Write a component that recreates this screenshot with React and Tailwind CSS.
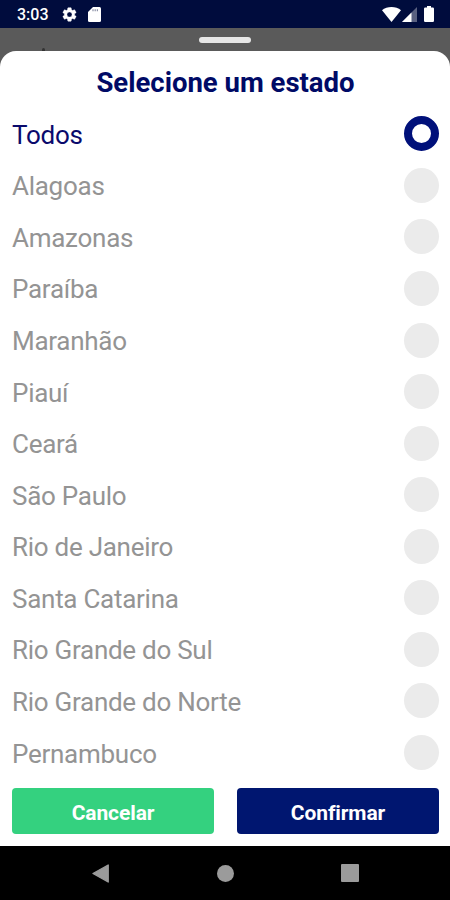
import { useState } from "react";

const states = [
  "Todos",
  "Alagoas",
  "Amazonas",
  "Paraíba",
  "Maranhão",
  "Piauí",
  "Ceará",
  "São Paulo",
  "Rio de Janeiro",
  "Santa Catarina",
  "Rio Grande do Sul",
  "Rio Grande do Norte",
  "Pernambuco",
];

function StatusBar() {
  return (
    <header className="h-7 shrink-0 bg-[#000c3d] flex items-center text-white pl-[17px] pr-[16px]">
      <span className="w-[44px] text-[16px] leading-7 font-medium pt-0.5">3:03</span>
      <svg className="w-[17px] h-[17px] mt-px" viewBox="0 0 24 24" fill="currentColor" stroke="currentColor" strokeWidth=".6">
        <path d="M19.14 12.94c.04-.3.06-.61.06-.94 0-.32-.02-.64-.07-.94l2.03-1.58a.49.49 0 0 0 .12-.61l-1.92-3.32a.49.49 0 0 0-.59-.22l-2.39.96c-.5-.38-1.03-.7-1.62-.94l-.36-2.54a.48.48 0 0 0-.48-.41h-3.84c-.24 0-.43.17-.47.41l-.36 2.54c-.59.24-1.13.57-1.62.94l-2.39-.96a.48.48 0 0 0-.59.22L2.74 8.87a.48.48 0 0 0 .12.61l2.03 1.58c-.05.3-.09.63-.09.94s.02.64.07.94l-2.03 1.58a.49.49 0 0 0-.12.61l1.92 3.32c.12.22.37.29.59.22l2.39-.96c.5.38 1.03.7 1.62.94l.36 2.54c.05.24.24.41.48.41h3.84c.24 0 .44-.17.47-.41l.36-2.54c.59-.24 1.13-.56 1.62-.94l2.39.96c.22.08.47 0 .59-.22l1.92-3.32a.48.48 0 0 0-.12-.61zM12 15.6a3.6 3.6 0 1 1 0-7.2 3.6 3.6 0 0 1 0 7.2z" />
      </svg>
      <svg className="w-[13px] h-[15px] ml-[10px] mt-px" viewBox="0 0 13 15">
        <path d="M5 0h6.5A1.5 1.5 0 0 1 13 1.5v12a1.5 1.5 0 0 1-1.5 1.5h-10A1.5 1.5 0 0 1 0 13.5V5z" fill="currentColor" />
        <path d="M5 2.2v2M7.2 2.2v2M9.4 2.2v2" stroke="#000c3d" strokeWidth="1.2" opacity=".45" />
      </svg>
      <svg className="w-[19px] h-[15px] ml-auto" viewBox="0 0 19 15">
        <path d="M0 3.3C5-1 14-1 19 3.3L9.5 15z" fill="currentColor" />
      </svg>
      <svg className="w-[15px] h-[15px] ml-[1px] mt-px" viewBox="0 0 15 15">
        <path d="M15 0v15H0z" fill="currentColor" opacity=".35" />
        <path d="M9.5 5.5V15H0z" fill="currentColor" />
      </svg>
      <svg className="w-[10px] h-4 ml-[7px]" viewBox="0 0 10 16">
        <path d="M3 0h4v1.6h1.8A1.2 1.2 0 0 1 10 2.8v12A1.2 1.2 0 0 1 8.8 16H1.2A1.2 1.2 0 0 1 0 14.8v-12a1.2 1.2 0 0 1 1.2-1.2H3z" fill="currentColor" />
      </svg>
    </header>
  );
}

function NavBar() {
  return (
    <nav className="h-[54px] shrink-0 bg-black flex items-center text-[#9b9b9b] pl-[92px] pr-[91px] justify-between">
      <svg className="w-[17px] h-[19px]" viewBox="0 0 17 19">
        <path d="M16.2 1v17L1 9.5z" fill="currentColor" stroke="currentColor" strokeWidth="1.4" strokeLinejoin="round" />
      </svg>
      <div className="w-[17px] h-[17px] rounded-full bg-[#9b9b9b]" />
      <div className="w-[18px] h-[18px] rounded-[1px] bg-[#9b9b9b]" />
    </nav>
  );
}

export default function App() {
  const [selected, setSelected] = useState("Todos");

  return (
    <div className="w-[450px] h-[900px] flex flex-col overflow-hidden bg-[#5a5a5a] font-[Roboto,sans-serif]">
      <StatusBar />

      {/* drag handle, with the tip of the page's back arrow behind the sheet */}
      <div className="h-[23px] shrink-0 flex justify-center pt-[9px] relative">
        <div className="w-[52px] h-[6px] rounded-full bg-[#e6e6e6]" />
        <span className="absolute left-[42px] bottom-0 w-[3px] h-[3px] rounded-t-full bg-[#333333]" />
      </div>

      <main className="flex-1 min-h-0 flex flex-col bg-white rounded-t-[16px] pl-[12px] pr-[11px]">
        <h1 className="h-[57px] shrink-0 pt-[16px] text-center text-[27.5px] leading-8 font-bold text-[#000a66]">
          Selecione um estado
        </h1>

        <ul>
          {states.map((name) => (
            <li
              key={name}
              onClick={() => setSelected(name)}
              className="h-[51.57px] flex items-center justify-between cursor-pointer"
            >
              <span className={selected === name ? "text-[26px] leading-8 pt-0.5 tracking-[-0.27px] text-[#0a0a6c]" : "text-[26px] leading-8 pt-0.5 tracking-[-0.27px] text-[#949494]"}>
                {name}
              </span>
              <span className={selected === name ? "w-[35px] h-[35px] rounded-full border-[8px] border-[#00107a] bg-white" : "w-[35px] h-[35px] rounded-full bg-[#ebebeb]"} />
            </li>
          ))}
        </ul>

        <div className="flex gap-[23px] pt-[10px]">
          <button className="flex-1 h-[46px] pt-[4px] rounded-[4px] bg-[#34d17f] text-white text-[21px] tracking-[-0.1px] font-bold">Cancelar</button>
          <button className="flex-1 h-[46px] pt-[4px] rounded-[4px] bg-[#001670] text-white text-[21px] tracking-[-0.1px] font-bold">Confirmar</button>
        </div>
      </main>

      <NavBar />
    </div>
  );
}
